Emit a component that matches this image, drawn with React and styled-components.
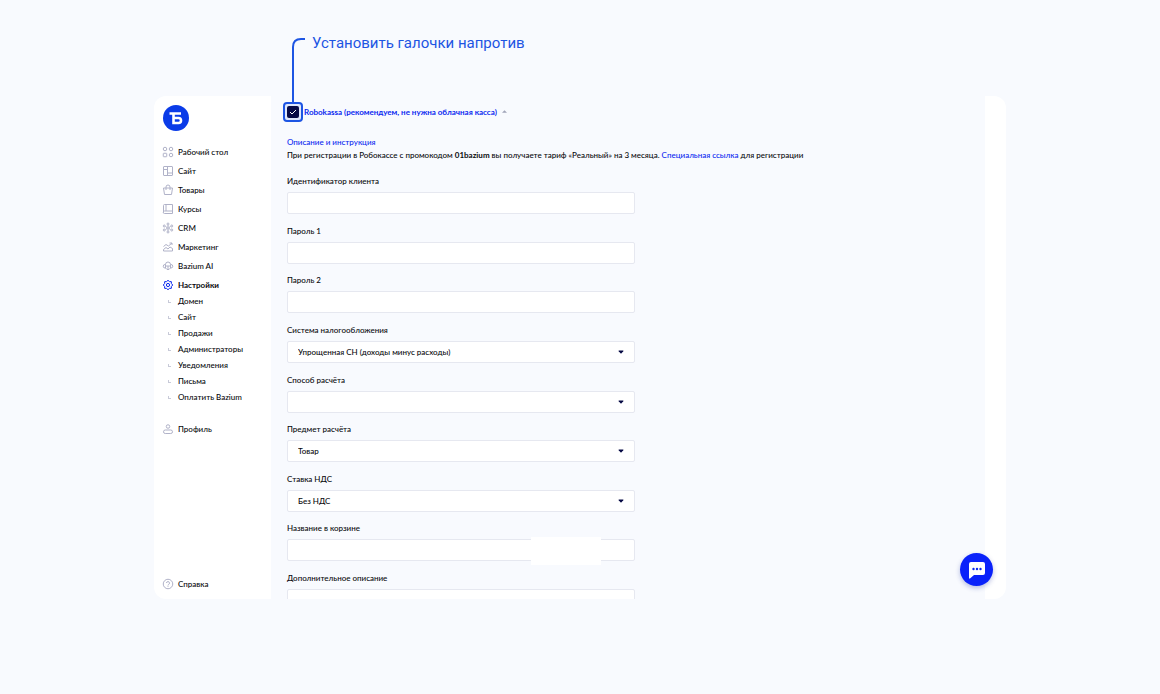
import React from "react";
import styled, { createGlobalStyle } from "styled-components";

const colors = {
  page: "#f8fafe",
  white: "#ffffff",
  text: "#08090c",
  blue: "#0a28f0",
  logo: "#0a3be8",
  note: "#1d55e3",
  navy: "#070b45",
  icon: "#b0b2c8",
  border: "#e6e8f0",
};

const navItems = [
  { icon: "desk", title: "Рабочий стол" },
  { icon: "site", title: "Сайт" },
  { icon: "goods", title: "Товары" },
  { icon: "courses", title: "Курсы" },
  { icon: "crm", title: "CRM" },
  { icon: "marketing", title: "Маркетинг" },
  { icon: "ai", title: "Bazium AI" },
  { icon: "settings", title: "Настройки", active: true },
];

const subItems = [
  "Домен",
  "Сайт",
  "Продажи",
  "Администраторы",
  "Уведомления",
  "Письма",
  "Оплатить Bazium",
];

const fields = [
  { id: "client", label: "Идентификатор клиента" },
  { id: "pass1", label: "Пароль 1" },
  { id: "pass2", label: "Пароль 2" },
  { id: "tax", label: "Система налогообложения", options: ["Упрощенная СН (доходы минус расходы)"] },
  { id: "method", label: "Способ расчёта", options: [""] },
  { id: "subject", label: "Предмет расчёта", options: ["Товар"] },
  { id: "vat", label: "Ставка НДС", options: ["Без НДС"] },
  { id: "cart", label: "Название в корзине", patch: true },
  { id: "extra", label: "Дополнительное описание" },
];

const icons = {
  desk: (
    <>
      <circle cx="4" cy="4" r="3.500" />
      <circle cx="16" cy="4" r="3.500" />
      <rect x=".5" y="12.500" width="7" height="7" rx="1" />
      <circle cx="16" cy="16" r="3.500" />
    </>
  ),
  site: (
    <>
      <rect x="1" y="1" width="18" height="18" rx="1" />
      <path d="M9 1v18M1 7h8M9 14h10" />
    </>
  ),
  goods: (
    <>
      <path d="M1 6h18l-2 13H3z" />
      <path d="M6 10V4a4 4 0 0 1 8 0v6" />
    </>
  ),
  courses: (
    <>
      <path d="M1 17V3a2 2 0 0 1 2-2h16v18H3a2 2 0 0 1 0-5h16" />
      <path d="M6 1v13" />
    </>
  ),
  crm: (
    <>
      <circle cx="10" cy="10" r="2" />
      <path d="M10 8V4M10 12v4M8 9 5 7M12 11l3 2M12 9l3-2M8 11l-3 2" />
      <circle cx="10" cy="2" r="2" />
      <circle cx="10" cy="18" r="2" />
      <circle cx="2.500" cy="6" r="2" />
      <circle cx="17.500" cy="6" r="2" />
      <circle cx="2.500" cy="14" r="2" />
      <circle cx="17.500" cy="14" r="2" />
    </>
  ),
  marketing: (
    <>
      <path d="m1 9 5-4 5 3 7-6M13 2h5v4" />
      <path d="M1 18v-3l5-4 4 3 4-4 5 3v5z" />
    </>
  ),
  ai: (
    <>
      <path d="M5 14H4a3.500 3.500 0 0 1 0-7h1a5 5 0 0 1 10 0h1a3.500 3.500 0 0 1 0 7h-1" />
      <path d="M5 7v7l3 3h4l3-3V7M5 10h10M10 10v7" />
    </>
  ),
  settings: (
    <>
      <path d="M10 .5 12.800 3.200 16.700 3.300 16.800 7.200 19.500 10 16.800 12.800 16.700 16.700 12.800 16.800 10 19.500 7.200 16.800 3.300 16.700 3.200 12.800.5 10 3.200 7.200 3.300 3.300 7.200 3.200z" />
      <circle cx="10" cy="10" r="3.200" />
    </>
  ),
  profile: (
    <>
      <circle cx="10" cy="5" r="3.500" />
      <rect x="1" y="12" width="18" height="7" rx="3.500" />
    </>
  ),
  help: (
    <>
      <circle cx="10" cy="10" r="9.500" />
      <path d="M7 8a3 3 0 1 1 4 3c-1 .5-1 1-1 2M10 14.500v1.500" />
    </>
  ),
};

const NavIcon = ({ name, active }) => (
  <IconSvg viewBox="0 0 20 20" $active={active} aria-hidden="true">
    {icons[name]}
  </IconSvg>
);

const Field = ({ id, label, options, patch }) => (
  <FieldWrap>
    <FieldLabel htmlFor={id}>{label}</FieldLabel>
    <ControlWrap>
      {options ? (
        <>
          <FieldSelect id={id}>
            {options.map((option) => (
              <option key={option}>{option}</option>
            ))}
          </FieldSelect>
          <SelectArrow viewBox="0 0 6 4" aria-hidden="true">
            <path d="M1 .5h4q.8 0 .3.700L3.500 3.200q-.5.5-1 0L.7 1.200Q.2.5 1 .5z" />
          </SelectArrow>
        </>
      ) : (
        <FieldInput id={id} type="text" />
      )}
      {patch && <Patch />}
    </ControlWrap>
  </FieldWrap>
);

const App = () => {
  return (
    <>
      <GlobalStyle />
      <Page>
        <NoteBar>
          <Note>Установить галочки напротив</Note>
        </NoteBar>
        <Frame>
          <Sidebar>
            <Logo viewBox="0 0 26 26" aria-label="Bazium">
              <circle cx="13" cy="13" r="13" fill={colors.logo} />
              <path
                d="M6.500 8.500H18M10.500 8.500v9.500h5a2.500 2.500 0 0 0 0-5h-5"
                fill="none"
                stroke={colors.white}
                strokeWidth="2.600"
              />
            </Logo>
            <Nav>
              {navItems.map((item) => (
                <NavLink key={item.title} href="#" $active={item.active}>
                  <NavIcon name={item.icon} active={item.active} />
                  {item.title}
                </NavLink>
              ))}
            </Nav>
            <SubNav>
              {subItems.map((title) => (
                <SubLink key={title} href="#">
                  <Corner />
                  {title}
                </SubLink>
              ))}
            </SubNav>
            <NavLink href="#">
              <NavIcon name="profile" />
              Профиль
            </NavLink>
            <HelpLink href="#">
              <NavIcon name="help" />
              Справка
            </HelpLink>
          </Sidebar>

          <Main>
            <Method>
              <CheckWrap>
                <Connector viewBox="0 0 13 65" aria-hidden="true">
                  <path d="M1 65V9q0-8 8-8h4" />
                </Connector>
                <Highlight />
                <Check id="robokassa" type="checkbox" defaultChecked />
                <CheckMark viewBox="0 0 12 12" aria-hidden="true">
                  <path d="m3 6 2 2 4-4" />
                </CheckMark>
              </CheckWrap>
              <MethodLabel htmlFor="robokassa">
                Robokassa (рекомендуем, не нужна облачная касса)
              </MethodLabel>
              <Caret viewBox="0 0 6 4" aria-hidden="true">
                <path d="M3 0 6 3H0z" />
              </Caret>
            </Method>
            <Info>
              <InfoLink href="#">Описание и инструкция</InfoLink>
              <br />
              При регистрации в Робокассе с промокодом <b>01bazium</b> вы получаете тариф
              «Реальный» на 3 месяца. <InfoLink href="#">Специальная ссылка</InfoLink> для
              регистрации
            </Info>
            <Form>
              {fields.map((field) => (
                <Field key={field.id} {...field} />
              ))}
            </Form>
          </Main>

          <ChatButton type="button" aria-label="Чат">
            <svg width="18" height="18" viewBox="0 0 18 18" aria-hidden="true">
              <path d="M3 1h12q2 0 2 2v9q0 2-2 2H6l-4 3.500q-1 .5-1-1V3q0-2 2-2z" fill={colors.white} />
              <g fill={colors.blue}>
                <circle cx="5.500" cy="8" r="1.200" />
                <circle cx="9" cy="8" r="1.200" />
                <circle cx="12.500" cy="8" r="1.200" />
              </g>
            </svg>
          </ChatButton>
        </Frame>
      </Page>
    </>
  );
};

export default App;

const GlobalStyle = createGlobalStyle`
  * {
    box-sizing: border-box;
  }

  body {
    margin: 0;
    background: ${colors.page};
    color: ${colors.text};
    font-family: Lato, Roboto, sans-serif;
    font-size: 8px;
    font-weight: 500;
  }

  input, select, button {
    font: inherit;
    color: inherit;
  }

  a {
    color: inherit;
    text-decoration: none;
  }
`;

const Page = styled.div`
  display: flex;
  flex-direction: column;
  height: 100vh;
  padding: 0 154px 95px;
`;

const NoteBar = styled.header`
  height: 96px;
  padding: 33px 0 0 158px;
`;

const Note = styled.h1`
  margin: 0;
  color: ${colors.note};
  font-family: Roboto, sans-serif;
  font-size: 15px;
  font-weight: 400;
  line-height: 20px;
  white-space: nowrap;
`;

const Frame = styled.div`
  position: relative;
  display: flex;
  flex: 1;
  min-height: 0;
  padding-right: 21px;
  background: ${colors.white};
  border-radius: 12px;
`;

const Sidebar = styled.aside`
  display: flex;
  flex-direction: column;
  width: 117px;
  flex-shrink: 0;
  padding: 9px 9px 7px;
`;

const Logo = styled.svg`
  width: 26px;
  height: 26px;
  margin-bottom: 12px;
`;

const Nav = styled.nav`
  display: flex;
  flex-direction: column;
  gap: 2px;
`;

const NavLink = styled.a`
  display: flex;
  align-items: center;
  gap: 5px;
  height: 17px;
  font-weight: ${({ $active }) => ($active ? 700 : 500)};
  white-space: nowrap;
`;

const HelpLink = styled(NavLink)`
  margin-top: auto;
`;

const IconSvg = styled.svg`
  width: 10px;
  height: 10px;
  overflow: visible;
  fill: none;
  stroke: ${({ $active }) => ($active ? colors.blue : colors.icon)};
  stroke-width: 2;
  stroke-linejoin: round;
`;

const SubNav = styled.nav`
  margin-bottom: 15px;
`;

const SubLink = styled.a`
  display: flex;
  align-items: center;
  gap: 7px;
  height: 16px;
  padding-left: 5px;
  white-space: nowrap;
`;

const Corner = styled.span`
  width: 3px;
  height: 3px;
  border-left: 1px solid #c8cad8;
  border-bottom: 1px solid #c8cad8;
`;

/* clips the form at the bottom, leaves room above for the connector */
const Main = styled.main`
  display: flex;
  flex-direction: column;
  flex: 1;
  min-width: 0;
  padding: 10px 16px 0;
  background: ${colors.page};
  clip-path: inset(-64px 0 0 0);
`;

const Method = styled.div`
  display: flex;
  align-items: center;
  gap: 5px;
  height: 12px;
`;

const CheckWrap = styled.div`
  position: relative;
  width: 12px;
  height: 12px;
`;

const Connector = styled.svg`
  position: absolute;
  left: 5px;
  bottom: 15px;
  width: 13px;
  height: 65px;
  fill: none;
  stroke: ${colors.note};
  stroke-width: 2;
`;

const Highlight = styled.span`
  position: absolute;
  inset: -4px;
  border: 2px solid ${colors.note};
  border-radius: 4px;
  background: #dfe8fc;
`;

const Check = styled.input`
  position: relative;
  display: block;
  appearance: none;
  width: 12px;
  height: 12px;
  margin: 0;
  border-radius: 2px;
  background: ${colors.navy};
`;

const CheckMark = styled.svg`
  position: absolute;
  inset: 0;
  fill: none;
  stroke: ${colors.white};
  pointer-events: none;
`;

const MethodLabel = styled.label`
  color: ${colors.blue};
  font-weight: 700;
  white-space: nowrap;
`;

const Caret = styled.svg`
  width: 5px;
  height: 4px;
  fill: #a0a4b8;
`;

const Info = styled.p`
  margin: 18px 0 13px;
  line-height: 13px;
`;

const InfoLink = styled.a`
  color: ${colors.blue};
`;

const Form = styled.form`
  display: flex;
  flex-direction: column;
  justify-content: space-between;
  flex: 1;
  width: 100%;
  max-width: 348px;
  margin-bottom: -12px;
`;

const FieldWrap = styled.div`
  display: flex;
  flex-direction: column;
  gap: 5px;
`;

const FieldLabel = styled.label`
  line-height: 12px;
`;

const ControlWrap = styled.div`
  position: relative;
`;

const FieldInput = styled.input`
  display: block;
  width: 100%;
  height: 22px;
  padding: 0 10px;
  border: 1px solid ${colors.border};
  border-radius: 2px;
  background: ${colors.white};
`;

const FieldSelect = styled.select`
  display: block;
  appearance: none;
  width: 100%;
  height: 22px;
  padding: 0 10px;
  border: 1px solid ${colors.border};
  border-radius: 2px;
  background: ${colors.white};
`;

const SelectArrow = styled.svg`
  position: absolute;
  top: 9px;
  right: 11px;
  width: 6px;
  height: 4px;
  fill: ${colors.navy};
  pointer-events: none;
`;

const Patch = styled.span`
  position: absolute;
  top: -2px;
  left: 70%;
  width: 70px;
  height: 28px;
  background: ${colors.white};
`;

const ChatButton = styled.button`
  position: absolute;
  right: 13px;
  bottom: 13px;
  display: flex;
  align-items: center;
  justify-content: center;
  width: 33px;
  height: 33px;
  padding: 0;
  border: none;
  border-radius: 50%;
  background: #0a22fa;
  box-shadow: 0 2px 5px rgba(20, 40, 160, 0.3);
`;
